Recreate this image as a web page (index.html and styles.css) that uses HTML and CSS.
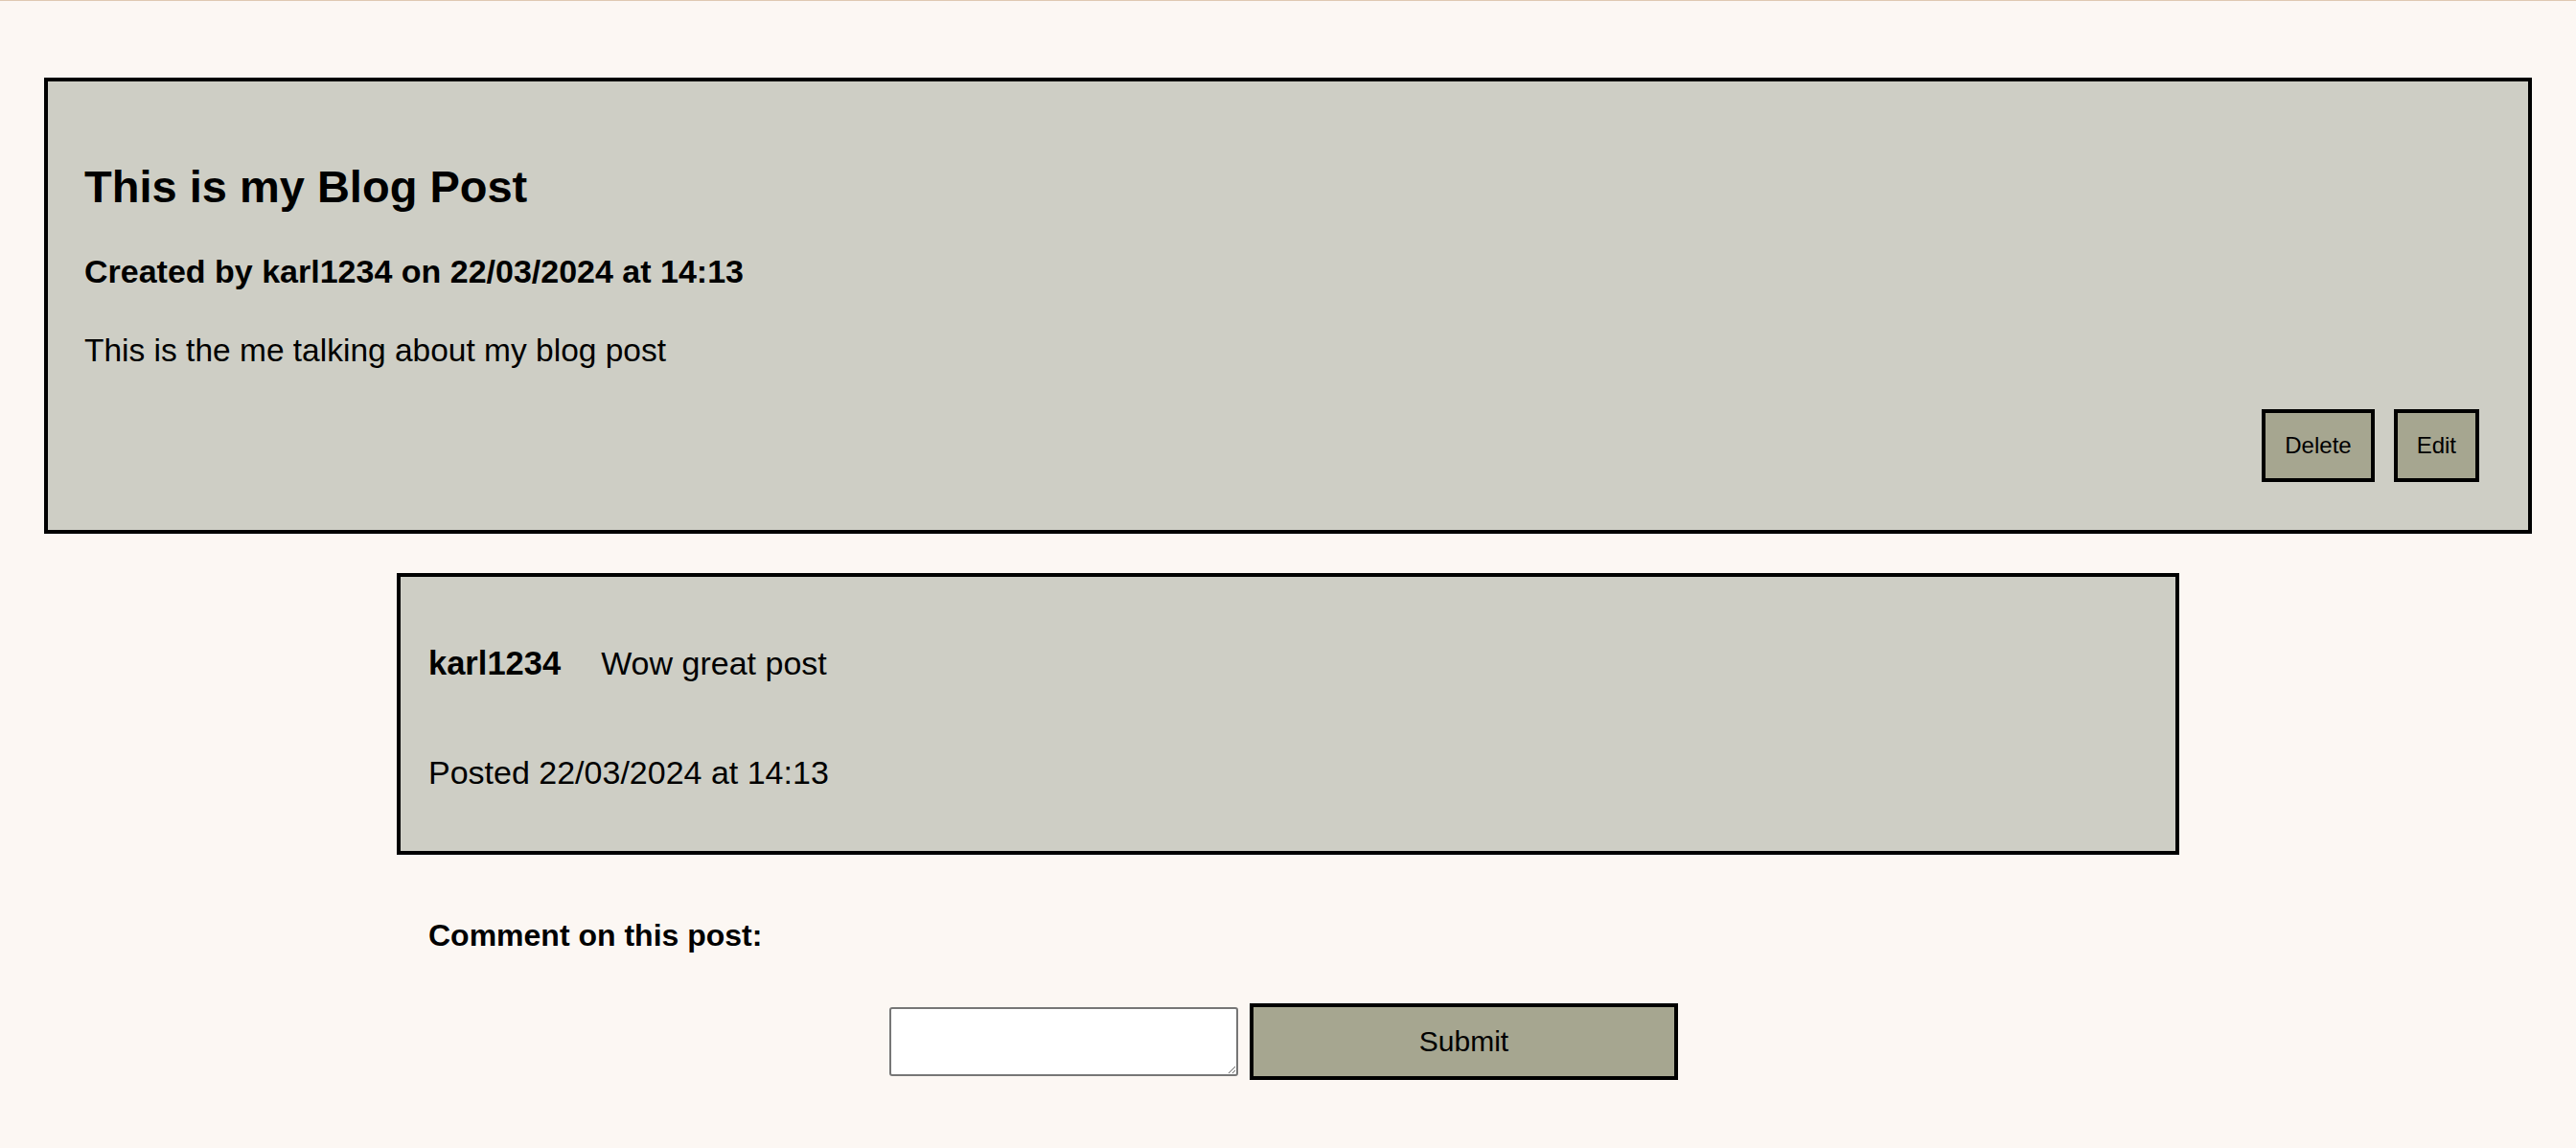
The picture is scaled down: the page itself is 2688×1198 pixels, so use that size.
FILE: index.html
```html
<!DOCTYPE html>
<html lang="en">
<head>
<meta charset="utf-8">
<title>This is my Blog Post</title>
<link rel="stylesheet" href="styles.css">
</head>
<body>
<header class="topbar"></header>
<main class="page">
  <article class="post">
    <h1 class="post-title">This is my Blog Post</h1>
    <p class="post-meta">Created by karl1234 on 22/03/2024 at 14:13</p>
    <p class="post-body">This is the me talking about my blog post</p>
    <div class="post-actions">
      <button class="btn" type="button">Delete</button>
      <button class="btn" type="button">Edit</button>
    </div>
  </article>

  <section class="comments">
    <div class="comment">
      <div class="comment-row">
        <span class="comment-user">karl1234</span>
        <span class="comment-text">Wow great post</span>
      </div>
      <p class="comment-date">Posted 22/03/2024 at 14:13</p>
    </div>

    <p class="comment-label">Comment on this post:</p>
    <form class="comment-form">
      <textarea class="comment-input" aria-label="Comment"></textarea>
      <button class="submit" type="button">Submit</button>
    </form>
  </section>
</main>
</body>
</html>
```

FILE: styles.css
```css
html, body {
  margin: 0;
  padding: 0;
}

body {
  background: #fcf7f3;
  color: #000;
  font-family: "Liberation Sans", Arial, sans-serif;
}

.topbar {
  height: 0;
  border-bottom: 1px solid #dfc8b2;
}

.page {
  padding: 80px 46px 40px;
}

.post {
  background: #cecec5;
  border: 4px solid #000;
  padding: 40px 51px 50px 38px;
}

.post-title {
  margin: 42px 0 0;
  font-size: 47px;
  line-height: 56px;
  font-weight: 700;
}

.post-meta {
  margin: 40px 0 0;
  font-size: 34px;
  line-height: 40px;
  font-weight: 700;
}

.post-body {
  margin: 43px 0 0;
  font-size: 33.5px;
  line-height: 40px;
}

.post-actions {
  margin-top: 41px;
  display: flex;
  justify-content: flex-end;
  gap: 20px;
}

.btn {
  height: 76px;
  padding: 0 20px;
  background: #a6a690;
  border: 4px solid #000;
  border-radius: 0;
  font-family: "Liberation Sans", Arial, sans-serif;
  font-size: 24px;
  color: #000;
}

.comments {
  width: 1860px;
  margin: 41px auto 0;
}

.comment {
  background: #cecec5;
  border: 4px solid #000;
  padding: 70px 29px 62px;
}

.comment-row {
  display: flex;
  gap: 42px;
  font-size: 34px;
  line-height: 40px;
}

.comment-user {
  font-weight: 700;
  font-size: 34.5px;
}

.comment-date {
  margin: 74px 0 0;
  font-size: 34px;
  line-height: 40px;
}

.comment-label {
  margin: 64px 0 0;
  padding-left: 33px;
  font-size: 32px;
  line-height: 40px;
  font-weight: 700;
}

.comment-form {
  margin-top: 51px;
  display: flex;
  align-items: center;
  justify-content: center;
  gap: 12px;
  padding-right: 9px;
}

.comment-input {
  box-sizing: border-box;
  width: 364px;
  height: 72px;
  margin: 0;
  background: #fff;
  border: 2px solid #767676;
  border-radius: 3px;
  font-family: "Liberation Sans", Arial, sans-serif;
  font-size: 20px;
}

.submit {
  box-sizing: border-box;
  width: 447px;
  height: 80px;
  margin: 0;
  background: #a6a690;
  border: 4px solid #000;
  border-radius: 0;
  font-family: "Liberation Sans", Arial, sans-serif;
  font-size: 30px;
  color: #000;
}
```
